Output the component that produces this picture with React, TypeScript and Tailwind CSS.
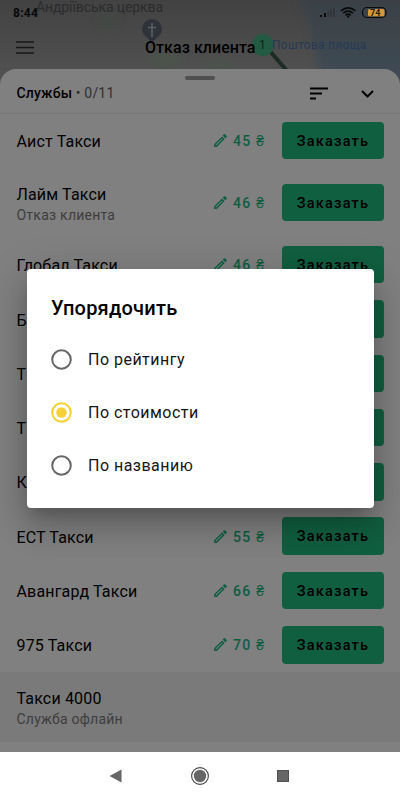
import React from "react";

type Service = { name: string; note?: string; price?: number };

const services: Service[] = [
  { name: "Аист Такси", price: 45 },
  { name: "Лайм Такси", note: "Отказ клиента", price: 46 },
  { name: "Глобал Такси", price: 46 },
  { name: "Б" },
  { name: "Т" },
  { name: "Т" },
  { name: "К" },
  { name: "ЕСТ Такси", price: 55 },
  { name: "Авангард Такси", price: 66 },
  { name: "975 Такси", price: 70 },
];

const options = ["По рейтингу", "По стоимости", "По названию"];

function Pencil() {
  return (
    <svg viewBox="0 0 24 24" className="h-[17px] w-[17px] shrink-0" fill="currentColor">
      <path d="M14.06 9.02l.92.92L5.92 19H5v-.92l9.06-9.06M17.66 3c-.25 0-.51.1-.7.29l-1.83 1.83 3.75 3.75 1.83-1.83c.39-.39.39-1.02 0-1.41l-2.34-2.34c-.2-.2-.45-.29-.71-.29zm-3.6 3.19L3 17.25V21h3.75L17.81 9.94l-3.75-3.75z" />
    </svg>
  );
}

function Radio({ checked }: { checked: boolean }) {
  return (
    <svg viewBox="0 0 21 21" className={`h-[21px] w-[21px] shrink-0 ${checked ? "text-[#f5d136]" : "text-[#666]"}`}>
      <circle cx="10.5" cy="10.5" r="9.3" fill="none" stroke="currentColor" strokeWidth="2" />
      {checked && <circle cx="10.5" cy="10.5" r="5.2" fill="currentColor" />}
    </svg>
  );
}

function MapBackdrop() {
  return (
    <svg className="absolute inset-0 h-[90px] w-[400px]" viewBox="0 0 400 90">
      <defs>
        <linearGradient id="land" x1="0" y1="0" x2="0" y2="1">
          <stop offset="0" stopColor="#424242" />
          <stop offset="1" stopColor="#545454" />
        </linearGradient>
        <linearGradient id="water" x1="0" y1="0" x2="0" y2="1">
          <stop offset="0" stopColor="#3a4045" />
          <stop offset="1" stopColor="#414d58" />
        </linearGradient>
        <filter id="soft"><feGaussianBlur stdDeviation="4" /></filter>
      </defs>
      <rect width="400" height="90" fill="url(#land)" />
      <g filter="url(#soft)">
        <path d="M295-10L311 30L326 100H420V-10Z" fill="url(#water)" />
        <ellipse cx="108" cy="22" rx="8" ry="6" fill="#414943" />
        <ellipse cx="165" cy="60" rx="16" ry="8" fill="#4b524b" />
        <ellipse cx="220" cy="66" rx="16" ry="5" fill="#4b524b" />
      </g>
      <path d="M152 43c-3-5-10-7-10-14a10 10 0 0 1 20 0c0 7-7 9-10 14z" fill="#30343a" />
      <path d="M152 23v14M148 27.5h8" stroke="#5b6168" strokeWidth="1.5" />
      <path d="M269 50L288 72" stroke="#1d2b25" strokeWidth="4" />
      <circle cx="263" cy="45" r="11" fill="#235a43" />
    </svg>
  );
}

function StatusIcons() {
  return (
    <svg className="absolute left-[318px] top-[5px] h-[15px] w-[72px]" viewBox="318 5 72 15">
      <path d="M320 17v-2h2v2zM324 17v-4h2v4z" fill="#0b0b0b" />
      <path d="M327.500 17v-6h1.500v6zM330 17v-8h1.500v8zM333 17V8h1.500v9z" fill="#303235" />
      <g fill="none" stroke="#090909" strokeWidth="1.7">
        <path d="M341 10.800q7.200-6 14.400 0" />
        <path d="M343.300 13.100q4.900-4 9.800 0" />
        <path d="M345.600 15.300q2.600-2.200 5.200 0" />
      </g>
      <circle cx="348.200" cy="16.600" r="1.200" fill="#090909" />
      <rect x="362.500" y="7.500" width="23.500" height="10" rx="4.500" fill="none" stroke="#0a0a0a" strokeWidth="1.200" />
      <rect x="368" y="9" width="16.500" height="7.200" rx="1.500" fill="#d59a38" />
    </svg>
  );
}

function ServiceRow({ name, note, price }: Service) {
  return (
    <div className={`flex shrink-0 items-center pl-[16.500px] pr-4 ${note ? "h-[69.800px]" : "h-[54.300px]"}`}>
      <div className="min-w-0 flex-1 pt-[3px]">
        <div className="text-[16px] leading-[22px] tracking-[0.160px] text-black">{name}</div>
        {note && <div className="text-[14px] leading-[19px] tracking-[0.240px] text-[#3d3d3d]">{note}</div>}
      </div>
      {price !== undefined && (
        <div className="flex w-[70px] shrink-0 items-center gap-[4px] text-[#0d5e40]">
          <Pencil />
          <span className="whitespace-nowrap pt-[2px] text-[14px] font-medium tracking-[1.300px]">{price} ₴</span>
        </div>
      )}
      <div className="flex h-[37.500px] w-[102px] shrink-0 items-center justify-center rounded-[4px] bg-[#115f41] text-[14.500px] font-medium tracking-[1.200px] text-black">
        {price !== undefined && <span className="pt-[2px]">Заказать</span>}
      </div>
    </div>
  );
}

export default function App() {
  return (
    <div className="relative flex h-[800px] w-[400px] flex-col overflow-hidden bg-[#484848] font-[Roboto,sans-serif]">
      <header className="relative h-[69px] shrink-0">
        <MapBackdrop />
        <span className="absolute left-[36px] top-0 whitespace-nowrap text-[14px] leading-[15px] tracking-[-0.100px] text-[#2a2c2e]">Андріївська церква</span>
        <span className="absolute left-[13px] top-[5px] text-[12px] font-bold leading-[16px] tracking-[0.300px] text-[#080808]">8:44</span>
        <StatusIcons />
        <span className="absolute left-[370px] top-[8px] text-[9px] font-bold leading-[10px] text-[#2a2112]">74</span>
        <svg className="absolute left-4 top-[40px] h-[15px] w-[18px]" viewBox="0 0 18 15" stroke="#171717" strokeWidth="1.500">
          <path d="M0 2h18M0 7.500h18M0 13h18" />
        </svg>
        <span className="absolute left-[145px] top-[38px] whitespace-nowrap text-[16px] font-medium leading-[20px] tracking-[0.050px] text-black">Отказ клиента</span>
        <span className="absolute left-[259px] top-[37px] text-[12px] leading-[16px] text-[#0d2019]">1</span>
        <span className="absolute left-[272px] top-[37px] whitespace-nowrap text-[12px] leading-[16px] tracking-[0.280px] text-[#263a56]">Поштова площа</span>
      </header>

      <main className="relative flex h-[683px] shrink-0 flex-col overflow-hidden rounded-t-[16px] bg-[#808080]">
        <div className="relative flex h-[44.500px] shrink-0 items-center border-b border-[#777] pl-[16.500px] pr-[26px] pt-[6px]">
          <div className="absolute left-[185px] top-[7px] h-[4px] w-[30px] rounded-full bg-[#4f4f4f]" />
          <div className="flex-1 text-[14px] tracking-[0.180px] text-[#303030]">
            <span className="font-medium text-black">Службы</span> • 0/11
          </div>
          <svg className="mr-[33px] h-[13px] w-[18px]" viewBox="0 0 18 13" fill="#000">
            <path d="M0 .500h18v2H0zM0 5.500h12v2H0zM0 10.500h6v2H0z" />
          </svg>
          <svg className="h-[8px] w-[13px]" viewBox="0 0 13 8" fill="none" stroke="#000" strokeWidth="2">
            <path d="M1 1l5.500 5.500L12 1" />
          </svg>
        </div>
        {services.map((s, i) => (
          <ServiceRow key={i} {...s} />
        ))}
        <div className="flex h-[69.800px] shrink-0 flex-col justify-center bg-[#7a7a7a] pl-[16.500px] pt-[3px]">
          <div className="text-[16px] leading-[22px] tracking-[0.160px] text-black">Такси 4000</div>
          <div className="text-[14px] leading-[19px] tracking-[0.240px] text-[#3d3d3d]">Служба офлайн</div>
        </div>
      </main>

      <nav className="relative z-20 h-12 shrink-0 bg-white">
        <svg className="h-12 w-[400px]" viewBox="0 752 400 48" fill="#666">
          <path d="M109.500 776L121.500 769.500V782.500Z" />
          <circle cx="200" cy="776" r="8.400" fill="none" stroke="#444" strokeWidth="1.100" />
          <circle cx="200" cy="776" r="6.200" />
          <rect x="277.500" y="770.500" width="11" height="11" stroke="#505050" />
        </svg>
      </nav>

      <div className="absolute left-[26.500px] top-[269px] z-10 flex h-[238.500px] w-[347.500px] flex-col rounded-[4px] bg-white pl-[24px] shadow-[0_10px_14px_-6px_rgba(0,0,0,0.2),0_20px_32px_2px_rgba(0,0,0,0.14),0_8px_40px_6px_rgba(0,0,0,0.12)]">
        <h2 className="mt-[25px] pl-[0.500px] text-[20px] font-medium leading-[28px] tracking-[0.230px] text-black">Упорядочить</h2>
        <div className="mt-[10.500px] flex flex-col">
          {options.map((label, i) => (
            <div key={label} className="flex h-[53px] items-center gap-[16.500px]">
              <Radio checked={i === 1} />
              <span className="pt-px text-[16px] leading-[22px] tracking-[0.480px] text-[#151515]">{label}</span>
            </div>
          ))}
        </div>
      </div>
    </div>
  );
}
